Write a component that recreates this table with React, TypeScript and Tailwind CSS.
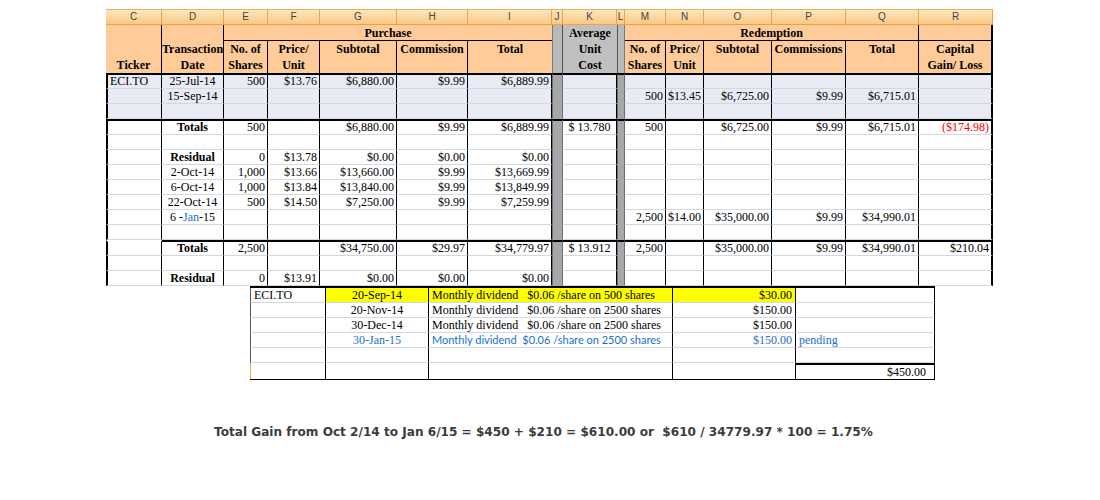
import React from 'react';

const LETTERS = ['C', 'D', 'E', 'F', 'G', 'H', 'I', 'J', 'K', 'L', 'M', 'N', 'O', 'P', 'Q', 'R'];
const W = [
  'w-[56px]', 'w-[62px]', 'w-[44px]', 'w-[52px]', 'w-[77px]', 'w-[71px]', 'w-[84px]', 'w-[11px]',
  'w-[54px]', 'w-[8px]', 'w-[41px]', 'w-[38px]', 'w-[68px]', 'w-[74px]', 'w-[73px]', 'w-[74px]',
];

type RowDef = Partial<Record<string, React.ReactNode>>;

const Blue = ({ children }: { children: React.ReactNode }) => <span className="text-[#1a6fd0]">{children}</span>;

const sec1: RowDef[] = [
  { C: 'ECI.TO', D: '25-Jul-14', E: '500', F: '$13.76', G: '$6,880.00', H: '$9.99', I: '$6,889.99' },
  { D: '15-Sep-14', M: '500', N: '$13.45', O: '$6,725.00', P: '$9.99', Q: '$6,715.01' },
  {},
];

const sec2: RowDef[] = [
  {
    D: <b>Totals</b>, E: '500', G: '$6,880.00', H: '$9.99', I: '$6,889.99', K: '$ 13.780', M: '500',
    O: '$6,725.00', P: '$9.99', Q: '$6,715.01', R: <span className="text-[#ff0000]">($174.98)</span>,
  },
  {},
  { D: <b>Residual</b>, E: '0', F: '$13.78', G: '$0.00', H: '$0.00', I: '$0.00' },
  { D: '2-Oct-14', E: '1,000', F: '$13.66', G: '$13,660.00', H: '$9.99', I: '$13,669.99' },
  { D: '6-Oct-14', E: '1,000', F: '$13.84', G: '$13,840.00', H: '$9.99', I: '$13,849.99' },
  { D: '22-Oct-14', E: '500', F: '$14.50', G: '$7,250.00', H: '$9.99', I: '$7,259.99' },
  { D: <>6 -<Blue>Jan</Blue>-15</>, M: '2,500', N: '$14.00', O: '$35,000.00', P: '$9.99', Q: '$34,990.01' },
  {},
];

const sec3: RowDef[] = [
  {
    D: <b>Totals</b>, E: '2,500', G: '$34,750.00', H: '$29.97', I: '$34,779.97', K: '$ 13.912', M: '2,500',
    O: '$35,000.00', P: '$9.99', Q: '$34,990.01', R: '$210.04',
  },
  {},
  { D: <b>Residual</b>, E: '0', F: '$13.91', G: '$0.00', H: '$0.00', I: '$0.00' },
];

function DataRow({ row, first, lavender, skipC }: { row: RowDef; first?: boolean; lavender?: boolean; skipC?: boolean }) {
  return (
    <div className="flex">
      {LETTERS.map((L, i) => {
        const gray = i === 7 || i === 9;
        const parts: string[] = [W[i], 'shrink-0 whitespace-pre overflow-visible px-[2px] border-b'];
        if (first) {
          parts.push('h-[16px] leading-[13px] border-t-2');
          parts.push(i === 0 && skipC ? 'border-t-white' : 'border-t-black');
        } else {
          parts.push('h-[15px] leading-[14px]');
        }
        if (gray) {
          parts.push('bg-[#a7a7aa] border-l border-l-[#6e6e6e] border-r border-r-[#6e6e6e] border-b-[#a7a7aa]');
        } else {
          parts.push('border-b-[#d0d7e5]');
          parts.push(lavender ? 'bg-[#e9ebf4]' : 'bg-white');
          if (i === 15) parts.push('border-r-2 border-r-black');
          else parts.push('border-r border-r-black');
        }
        if (i === 0) parts.push('border-l-2 border-l-black');
        parts.push(i === 0 ? 'text-left' : i === 1 || i === 8 ? 'text-center' : 'text-right');
        return (
          <div key={L} className={parts.join(' ')}>
            {row[L] ?? ''}
          </div>
        );
      })}
    </div>
  );
}

function Header() {
  const cell = 'bg-[#ffcc99] text-center leading-[16px] font-bold whitespace-nowrap';
  return (
    <div className="grid grid-cols-[56px_62px_44px_52px_77px_71px_84px_11px_54px_8px_41px_38px_68px_74px_73px_74px] grid-rows-[16px_16px_16px]">
      <div className={`${cell} col-start-1 row-start-1 row-span-3 border-r border-black flex flex-col justify-end`}>Ticker</div>
      <div className={`${cell} col-start-2 row-start-1 row-span-3 border-r border-black flex flex-col justify-end`}>
        <span>Transaction</span>
        <span>Date</span>
      </div>
      <div className={`${cell} col-start-3 col-span-5 row-start-1 border-b border-black`}>Purchase</div>
      <div className={`${cell} col-start-3 row-start-2 row-span-2 border-r border-black flex flex-col`}>
        <span>No. of</span>
        <span>Shares</span>
      </div>
      <div className={`${cell} col-start-4 row-start-2 row-span-2 border-r border-black flex flex-col`}>
        <span>Price/</span>
        <span>Unit</span>
      </div>
      <div className={`${cell} col-start-5 row-start-2 row-span-2 border-r border-black`}>Subtotal</div>
      <div className={`${cell} col-start-6 row-start-2 row-span-2 border-r border-black`}>Commission</div>
      <div className={`${cell} col-start-7 row-start-2 row-span-2`}>Total</div>
      <div className="col-start-8 row-start-1 row-span-3 bg-[#b9b9b9] border-l border-l-[#7a7a7a] border-r border-r-[#555]" />
      <div className={`col-start-9 row-start-1 row-span-3 bg-[#c0c0c0] text-center leading-[16px] font-bold flex flex-col`}>
        <span>Average</span>
        <span>Unit</span>
        <span>Cost</span>
      </div>
      <div className="col-start-10 row-start-1 row-span-3 bg-[#b9b9b9] border-l border-l-[#555] border-r border-r-[#7a7a7a]" />
      <div className={`${cell} col-start-11 col-span-5 row-start-1 border-b border-black border-r border-r-black`}>Redemption</div>
      <div className={`${cell} col-start-16 row-start-1 border-b border-black border-r-2 border-r-black`} />
      <div className={`${cell} col-start-11 row-start-2 row-span-2 border-r border-black flex flex-col`}>
        <span>No. of</span>
        <span>Shares</span>
      </div>
      <div className={`${cell} col-start-12 row-start-2 row-span-2 border-r border-black flex flex-col`}>
        <span>Price/</span>
        <span>Unit</span>
      </div>
      <div className={`${cell} col-start-13 row-start-2 row-span-2 border-r border-black`}>Subtotal</div>
      <div className={`${cell} col-start-14 row-start-2 row-span-2 border-r border-black`}>Commissions</div>
      <div className={`${cell} col-start-15 row-start-2 row-span-2 border-r border-black`}>Total</div>
      <div className={`${cell} col-start-16 row-start-2 row-span-2 border-r-2 border-r-black flex flex-col`}>
        <span>Capital</span>
        <span>Gain/ Loss</span>
      </div>
    </div>
  );
}

const DW = ['w-[76px]', 'w-[103px]', 'w-[244px]', 'w-[123px]', 'w-[139px]'];

type DivCell = { t?: React.ReactNode; cls?: string };

const divRows: DivCell[][] = [
  [
    { t: 'ECI.TO', cls: 'text-left' },
    { t: '20-Sep-14', cls: 'text-center bg-[#ffff00]' },
    { t: 'Monthly dividend   $0.06 /share on 500 shares', cls: 'text-left bg-[#ffff00]' },
    { t: '$30.00', cls: 'text-right bg-[#ffff00]' },
    {},
  ],
  [
    {},
    { t: '20-Nov-14', cls: 'text-center' },
    { t: 'Monthly dividend   $0.06 /share on 2500 shares', cls: 'text-left' },
    { t: '$150.00', cls: 'text-right' },
    {},
  ],
  [
    {},
    { t: '30-Dec-14', cls: 'text-center' },
    { t: 'Monthly dividend   $0.06 /share on 2500 shares', cls: 'text-left' },
    { t: '$150.00', cls: 'text-right' },
    {},
  ],
  [
    {},
    { t: '30-Jan-15', cls: 'text-center text-[#1a6fd0]' },
    {
      t: 'Monthly dividend  $0.06 /share on 2500 shares',
      cls: "text-left text-[#1a6fd0] font-['Lato',sans-serif] text-[11px]",
    },
    { t: '$150.00', cls: 'text-right text-[#1a6fd0]' },
    { t: 'pending', cls: 'text-left text-[#1a6fd0]' },
  ],
  [{}, {}, {}, {}, {}],
];

function DividendTable() {
  return (
    <div className="ml-[144px] w-[685px] border-t-2 border-black border-b border-b-black">
      {divRows.map((row, ri) => (
        <div key={ri} className="flex">
          {row.map((c, ci) => (
            <div
              key={ci}
              className={`${DW[ci]} h-[15px] leading-[14px] shrink-0 whitespace-pre px-[3px] border-b border-b-[#d0d7e5] border-r border-r-black ${
                ci === 0 ? 'border-l border-l-[#555]' : ''
              } ${c.cls ?? ''}`}
            >
              {c.t ?? ''}
            </div>
          ))}
        </div>
      ))}
      <div className="flex">
        <div className={`${DW[0]} h-[16px] shrink-0 border-l border-l-[#f4a94b] border-r border-r-black`} />
        <div className={`${DW[1]} h-[16px] shrink-0 border-r border-r-black`} />
        <div className={`${DW[2]} h-[16px] shrink-0 border-r border-r-black`} />
        <div className={`${DW[3]} h-[16px] shrink-0 border-r border-r-black`} />
        <div className={`${DW[4]} h-[16px] shrink-0 border-t-2 border-t-black border-r border-r-black text-right px-[8px] leading-[14px]`}>
          $450.00
        </div>
      </div>
    </div>
  );
}

export default function App() {
  return (
    <div className="w-[1100px] h-[500px] bg-white pt-[9px] pl-[106px] font-['Liberation_Serif',serif] text-[12px] text-black overflow-hidden">
      <div className="w-[887px]">
        <div className="flex h-[16px] border-t border-t-[#e3b26c] border-b border-b-[#f0a048] bg-linear-to-b from-[#fde6bd] to-[#f8c983]">
          {LETTERS.map((L, i) => (
            <div
              key={L}
              className={`${W[i]} shrink-0 border-r border-r-[#f0a048] text-center text-[10px] leading-[14px] text-[#444] font-['Liberation_Sans',sans-serif]`}
            >
              {L}
            </div>
          ))}
        </div>
        <Header />
        {sec1.map((r, i) => (
          <DataRow key={`a${i}`} row={r} first={i === 0} lavender />
        ))}
        {sec2.map((r, i) => (
          <DataRow key={`b${i}`} row={r} first={i === 0} />
        ))}
        {sec3.map((r, i) => (
          <DataRow key={`c${i}`} row={r} first={i === 0} skipC />
        ))}
      </div>
      <DividendTable />
      <div className="mt-[44px] ml-[108px] whitespace-pre font-['DejaVu_Sans',sans-serif] font-bold text-[12.1px] leading-[16px] text-[#3c3c3c]">
        Total Gain from Oct 2/14 to Jan 6/15 = $450 + $210 = $610.00 or  $610 / 34779.97 * 100 = 1.75%
      </div>
    </div>
  );
}
